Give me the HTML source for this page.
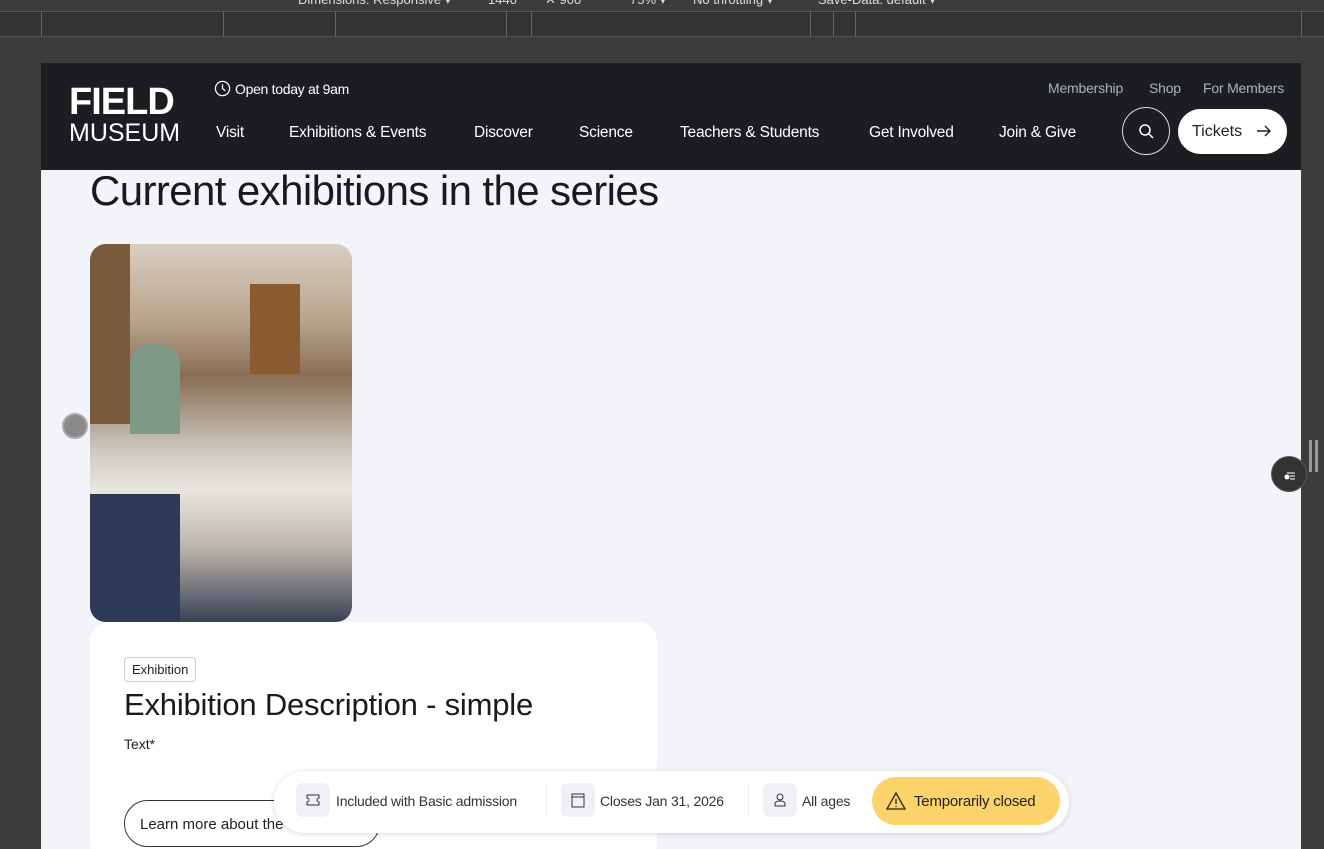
<!DOCTYPE html>
<html><head><meta charset="utf-8"><style>
*{margin:0;padding:0;box-sizing:border-box}
body{width:1324px;height:849px;overflow:hidden;background:#3c3c3c;font-family:"Liberation Sans",sans-serif;position:relative}
.top{position:absolute;left:0;top:0;width:1324px;height:12px;background:#3c3c3c;border-bottom:1px solid #5a5a5a;overflow:hidden}
.top span{position:absolute;top:-8px;color:#ddd;font-size:13px}
.ruler{position:absolute;left:0;top:12px;width:1324px;height:25px;background:#333;border-bottom:1px solid #555}
.ruler i{position:absolute;top:0;width:1px;height:24px;background:#666}
.page{position:absolute;left:41px;top:63px;width:1260px;height:786px;background:#f3f4f9;overflow:hidden}
.hdr{position:absolute;left:0;top:0;width:1260px;height:107px;background:#1c1d20;color:#fff}
.logo{position:absolute;left:28px;top:20px;font-weight:bold;line-height:1}
.logo .a{font-size:38px;letter-spacing:-1px;font-weight:900}
.logo .b{font-size:25px;font-weight:normal;letter-spacing:0}
.open{position:absolute;left:173px;top:17px;font-size:14px;display:flex;align-items:center;gap:4px;letter-spacing:-.3px}
.nav{position:absolute;top:61px;font-size:15.5px;letter-spacing:-.2px}
.util{position:absolute;top:17px;font-size:14px;color:#a9b3bf;letter-spacing:-.2px}
.srch{position:absolute;left:1081px;top:44px;width:48px;height:48px;border:1px solid #ddd;border-radius:50%}
.tix{position:absolute;left:1137px;top:46px;width:109px;height:45px;background:#fff;border-radius:23px;color:#222;font-size:16px;padding:14px 0 0 14px}
h1{position:absolute;left:49px;top:104px;font-size:42px;font-weight:normal;color:#1a1a1a;letter-spacing:-.6px}
.img{position:absolute;left:49px;top:181px;width:262px;height:378px;border-radius:16px;overflow:hidden;background:linear-gradient(180deg,#d8cfc1 0%,#b9a48d 20%,#8a6e55 35%,#cfc9c2 55%,#e9e6e0 65%,#bdb6ac 80%,#3a4256 100%)}
.card{position:absolute;left:49px;top:559px;width:567px;height:240px;background:#fff;border-radius:20px}
.tag{position:absolute;left:34px;top:35px;border:1px solid #ccc;border-radius:4px;font-size:13px;padding:4px 7px;color:#222}
.card h2{position:absolute;left:34px;top:65px;font-size:31px;font-weight:normal;color:#1a1a1a;letter-spacing:-.2px}
.card p{position:absolute;left:34px;top:114px;font-size:14px;color:#222}
.btn{position:absolute;left:34px;top:178px;width:256px;height:47px;border:1px solid #333;border-radius:24px;font-size:15px;padding:15px 0 0 15px;color:#222}
.bar{position:absolute;left:233px;top:708px;width:795px;height:62px;background:#fff;border-radius:31px;box-shadow:0 1px 6px rgba(0,0,0,.15);font-size:14px;color:#333;letter-spacing:-.2px}
.ic{position:absolute;top:12px;width:34px;height:34px;background:#f0f1f6;border-radius:7px}
.bar span.t{position:absolute;top:22px}
.sep{position:absolute;top:14px;width:1px;height:32px;background:#eee}
.warn{position:absolute;left:598px;top:6px;width:188px;height:48px;background:#fcd36a;border-radius:24px;font-size:15px;padding:16px 0 0 42px;color:#222}
</style></head><body>
<div class="top"><span style="left:298px">Dimensions: Responsive ▾</span><span style="left:488px">1440</span><span style="left:545px">✕ 900</span><span style="left:630px">75% ▾</span><span style="left:693px">No throttling ▾</span><span style="left:818px">Save-Data: default ▾</span></div>
<div class="ruler"><i style="left:41px"></i><i style="left:223px"></i><i style="left:335px"></i><i style="left:506px"></i><i style="left:531px"></i><i style="left:810px"></i><i style="left:833px"></i><i style="left:855px"></i><i style="left:1301px"></i></div>
<div class="page">
<div class="hdr">
<div class="logo"><div class="a">FIELD</div><div class="b">MUSEUM</div></div>
<div class="open"><svg width="17" height="17" viewBox="0 0 18 18"><circle cx="9" cy="9" r="7.5" fill="none" stroke="#fff" stroke-width="1.3"/><path d="M9 4.5V9l3 2.5" fill="none" stroke="#fff" stroke-width="1.3"/></svg>Open today at 9am</div>
<div class="nav" style="left:175px">Visit</div><div class="nav" style="left:248px">Exhibitions &amp; Events</div><div class="nav" style="left:433px">Discover</div><div class="nav" style="left:538px">Science</div><div class="nav" style="left:639px">Teachers &amp; Students</div><div class="nav" style="left:828px">Get Involved</div><div class="nav" style="left:958px">Join &amp; Give</div>
<div class="util" style="left:1007px">Membership</div><div class="util" style="left:1108px">Shop</div><div class="util" style="left:1162px">For Members</div>
<div class="srch"><svg width="48" height="48" viewBox="0 0 48 48"><circle cx="22" cy="22" r="5" fill="none" stroke="#fff" stroke-width="1.5"/><path d="M26 26l4 4" stroke="#fff" stroke-width="1.5"/></svg></div>
<div class="tix">Tickets <svg style="position:absolute;left:78px;top:14px" width="16" height="16" viewBox="0 0 16 16"><path d="M1 8h13M9 3l5 5-5 5" fill="none" stroke="#222" stroke-width="1.4"/></svg></div>
</div>
<h1>Current exhibitions in the series</h1>
<div class="img">
<div style="position:absolute;left:0;top:0;width:40px;height:180px;background:#7a5a3c"></div>
<div style="position:absolute;left:160px;top:40px;width:50px;height:90px;background:#8a5a30"></div>
<div style="position:absolute;left:40px;top:100px;width:50px;height:90px;background:#7e9a84;border-radius:20px 20px 0 0"></div>
<div style="position:absolute;left:0;top:250px;width:90px;height:128px;background:#2e3a58"></div>
</div>
<div class="card"><div class="tag">Exhibition</div><h2>Exhibition Description - simple</h2><p>Text*</p><div class="btn">Learn more about the</div></div>
<div style="position:absolute;left:21px;top:350px;width:26px;height:26px;border-radius:50%;background:#8a8a8a;border:2px solid #aaa"></div>
<div class="bar">
<div class="ic" style="left:22px"><svg width="34" height="34" viewBox="0 0 34 34"><path d="M11 12h12v3a2 2 0 0 0 0 4v3H11v-3a2 2 0 0 0 0-4z" fill="none" stroke="#333"/></svg></div><span class="t" style="left:62px">Included with Basic admission</span>
<div class="sep" style="left:272px"></div>
<div class="ic" style="left:287px"><svg width="34" height="34" viewBox="0 0 34 34"><rect x="11" y="11" width="12" height="13" fill="none" stroke="#333"/><path d="M11 14h12" stroke="#333"/></svg></div><span class="t" style="left:326px">Closes Jan 31, 2026</span>
<div class="sep" style="left:474px"></div>
<div class="ic" style="left:489px"><svg width="34" height="34" viewBox="0 0 34 34"><circle cx="17" cy="14" r="3" fill="none" stroke="#333"/><path d="M12 23v-2c0-2 2-3 5-3s5 1 5 3v2z" fill="none" stroke="#333"/></svg></div><span class="t" style="left:528px">All ages</span>
<div class="warn"><svg style="position:absolute;left:14px;top:15px" width="20" height="18" viewBox="0 0 20 18"><path d="M10 1L19 17H1z" fill="none" stroke="#222" stroke-width="1.3"/><path d="M10 7v5M10 14v1" stroke="#222" stroke-width="1.3"/></svg>Temporarily closed</div>
</div>
</div>
<div style="position:absolute;left:1271px;top:456px;width:36px;height:36px;border-radius:50%;background:#333;border:1px solid #555"><svg width="36" height="36" viewBox="0 0 36 36"><circle cx="15" cy="20" r="2.5" fill="#fff"/><path d="M15 16h8M18 19h5M18 22h5" stroke="#ddd" stroke-width="1.3"/></svg></div>
<div style="position:absolute;left:1309px;top:440px;width:3px;height:32px;background:#999"></div><div style="position:absolute;left:1315px;top:440px;width:3px;height:32px;background:#999"></div>
</body></html>
